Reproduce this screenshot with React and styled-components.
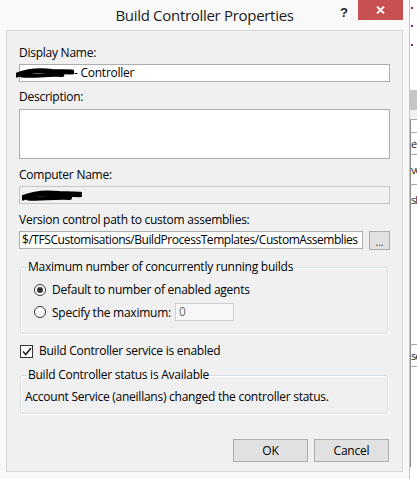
import React from "react";
import styled, { createGlobalStyle } from "styled-components";

const GlobalStyle = createGlobalStyle`
  html, body { margin: 0; padding: 0; background: #ffffff; }
  body {
    font-family: "Open Sans", "Noto Sans", sans-serif;
    font-size: 12px;
    color: #000;
  }
  * { box-sizing: border-box; }
`;

const Screen = styled.div`
  display: flex;
  width: 417px;
  height: 479px;
  overflow: hidden;
`;

const Window = styled.div`
  width: 410px;
  flex: none;
  height: 479px;
  background: #f9f9f9;
  border-right: 1px solid #c4c4c4;
  display: flex;
  flex-direction: column;
`;

const TitleBar = styled.div`
  height: 30px;
  display: grid;
  grid-template-columns: 1fr auto 1fr;
  align-items: start;
`;

const Title = styled.div`
  grid-column: 2;
  font-size: 15px;
  line-height: 30px;
  color: #1a1a1a;
  letter-spacing: -0.3px;
`;

const Controls = styled.div`
  grid-column: 3;
  display: flex;
  justify-content: flex-end;
  align-items: flex-start;
  padding-right: 6px;
`;

const Help = styled.div`
  font-family: "Liberation Sans", Arial, sans-serif;
  font-weight: bold;
  font-size: 13px;
  line-height: 20px;
  color: #222;
  margin-right: 10px;
  padding-top: 3px;
`;

const CloseButton = styled.div`
  width: 45px;
  height: 20px;
  background: #c75050;
  display: flex;
  align-items: center;
  justify-content: center;
`;

const Panel = styled.div`
  margin: 0 6px;
  height: 442px;
  border: 1px solid #d6d6d6;
  background: #f0f0f0;
  padding: 14px 12px 0 12px;
  display: flex;
  flex-direction: column;
`;

const Label = styled.div`
  line-height: 16px;
  height: 16px;
  margin-top: ${(p) => p.$mt || 0}px;
  white-space: nowrap;
  letter-spacing: -0.25px;
`;

const TextBox = styled.div`
  margin-top: ${(p) => (p.$mt === undefined ? 3 : p.$mt)}px;
  height: ${(p) => p.$h || 18}px;
  width: ${(p) => (p.$w ? p.$w + "px" : "100%")};
  border: 1px solid ${(p) => (p.$disabled ? "#c6c6c6" : "#abadb3")};
  background: ${(p) => (p.$disabled ? "#f0f0f0" : "#fff")};
  padding: 0 2px;
  line-height: 16px;
  display: flex;
  align-items: center;
  white-space: nowrap;
  overflow: visible;
  letter-spacing: -0.25px;
  flex: none;
`;

const PathRow = styled.div`
  margin-top: 3px;
  display: flex;
  align-items: flex-start;
  gap: 6px;
`;

const PathBox = styled(TextBox)`
  margin-top: 0;
  flex: 1;
  overflow: hidden;
  letter-spacing: -0.45px;
`;

const SmallButton = styled.div`
  width: 21px;
  height: 19px;
  background: #e1e1e1;
  border: 1px solid #adadad;
  display: flex;
  align-items: flex-end;
  justify-content: center;
  font-size: 10px;
  line-height: 14px;
  color: #333;
`;

const Group = styled.fieldset`
  margin: ${(p) => p.$mt}px 2px 0 1px;
  padding: 0;
  border: 1px solid #d5dfe5;
  border-radius: 3px;
  box-shadow: inset 1px 1px 0 #ffffff, 1px 1px 0 #ffffff;
  min-width: 0;
`;

const Legend = styled.legend`
  margin-left: 6px;
  padding: 0 1px;
  line-height: 16px;
  letter-spacing: -0.25px;
`;

const GroupBody = styled.div`
  padding: ${(p) => p.$pad};
  display: flex;
  flex-direction: column;
  gap: 5px;
`;

const OptionRow = styled.div`
  display: flex;
  align-items: center;
  min-height: 16px;
  letter-spacing: -0.25px;
  white-space: nowrap;
`;

const Radio = styled.span`
  width: 12px;
  height: 12px;
  border-radius: 50%;
  border: 1px solid #333;
  background: #fff;
  margin-right: 6px;
  display: flex;
  align-items: center;
  justify-content: center;
  flex: none;
  &::after {
    content: "";
    width: 6px;
    height: 6px;
    border-radius: 50%;
    background: ${(p) => (p.$checked ? "#333" : "transparent")};
  }
`;

const MaxBox = styled(TextBox)`
  margin: 0 0 0 4px;
  width: 59px;
  height: 18px;
  border-color: #cfcfcf;
  background: #f7f7f7;
  color: #6d6d6d;
  padding-left: 3px;
`;

const CheckRow = styled(OptionRow)`
  margin-top: 9px;
  margin-left: 1px;
  line-height: 16px;
`;

const CheckBox = styled.span`
  width: 13px;
  height: 13px;
  border: 1px solid #333;
  background: #fff;
  margin-right: 6px;
  display: flex;
  align-items: center;
  justify-content: center;
  flex: none;
`;

const StatusText = styled.div`
  line-height: 16px;
  letter-spacing: -0.25px;
  white-space: nowrap;
`;

const ButtonRow = styled.div`
  margin-top: 25px;
  display: flex;
  justify-content: flex-end;
  gap: 6px;
  padding-right: 1px;
`;

const Button = styled.div`
  width: 75px;
  height: 23px;
  background: #e1e1e1;
  border: 1px solid #adadad;
  display: flex;
  align-items: center;
  justify-content: center;
  letter-spacing: -0.2px;
`;

const Strip = styled.div`
  width: 7px;
  flex: none;
  background: #fff;
  display: flex;
  flex-direction: column;
`;

const StripCell = styled.div`
  height: ${(p) => p.$h}px;
  flex: none;
  background: ${(p) => p.$bg || "#fff"};
  border-bottom: ${(p) => (p.$line ? "1px solid #a9a9a9" : "none")};
  border-left: ${(p) => (p.$edge ? "1px solid #8a8a8a" : "none")};
  display: flex;
  justify-content: flex-start;
  align-items: center;
  white-space: nowrap;
  font-size: 11px;
  letter-spacing: -1px;
  color: #222;
  padding-left: 0;
`;

const Dot = styled.span`
  display: block;
  width: 2px;
  height: 2px;
  background: #7a2a6e;
  margin: ${(p) => p.$mt}px 0 0 1px;
`;

const DotCell = styled.div`
  height: 90px;
  display: flex;
  flex-direction: column;
`;

function Scribble({ w, h, style }) {
  return (
    <svg width={w} height={h} viewBox={`0 0 ${w} ${h}`} style={style}>
      <path
        d={`M1 ${h * 0.7} C ${w * 0.2} ${h * 0.3}, ${w * 0.4} ${h * 0.2}, ${w * 0.62} ${h * 0.35} L ${w - 2} ${h * 0.4}`}
        stroke="#000"
        strokeWidth={h * 0.5}
        fill="none"
        strokeLinecap="round"
      />
      <path
        d={`M${w * 0.1} ${h * 0.75} C ${w * 0.3} ${h * 0.9}, ${w * 0.5} ${h * 0.6}, ${w * 0.8} ${h * 0.7}`}
        stroke="#000"
        strokeWidth={h * 0.4}
        fill="none"
        strokeLinecap="round"
      />
    </svg>
  );
}

export default function App() {
  return (
    <>
      <GlobalStyle />
      <Screen>
        <Window>
          <TitleBar>
            <Title>Build Controller Properties</Title>
            <Controls>
              <Help>?</Help>
              <CloseButton>
                <svg width="9" height="8" viewBox="0 0 9 8">
                  <path d="M1 0.5 L8 7.5 M8 0.5 L1 7.5" stroke="#fff" strokeWidth="1.8" />
                </svg>
              </CloseButton>
            </Controls>
          </TitleBar>
          <Panel>
            <Label>Display Name:</Label>
            <TextBox>
              <Scribble w={58} h={10} style={{ marginLeft: -6, flex: "none" }} />
              <span>- Controller</span>
            </TextBox>
            <Label $mt={7}>Description:</Label>
            <TextBox $mt={4} $h={50} />
            <Label $mt={8}>Computer Name:</Label>
            <TextBox $disabled>
              <Scribble w={60} h={11} style={{ flex: "none" }} />
            </TextBox>
            <Label $mt={8}>Version control path to custom assemblies:</Label>
            <PathRow>
              <PathBox>$/TFSCustomisations/BuildProcessTemplates/CustomAssemblies</PathBox>
              <SmallButton>...</SmallButton>
            </PathRow>
            <Group $mt={9}>
              <Legend>Maximum number of concurrently running builds</Legend>
              <GroupBody $pad="6px 0 12px 13px">
                <OptionRow>
                  <Radio $checked />
                  Default to number of enabled agents
                </OptionRow>
                <OptionRow>
                  <Radio />
                  Specify the maximum:
                  <MaxBox $disabled>0</MaxBox>
                </OptionRow>
              </GroupBody>
            </Group>
            <CheckRow>
              <CheckBox>
                <svg width="10" height="9" viewBox="0 0 10 9">
                  <path d="M1 4.5 L3.8 7.5 L9 1" stroke="#222" strokeWidth="1.6" fill="none" />
                </svg>
              </CheckBox>
              Build Controller service is enabled
            </CheckRow>
            <Group $mt={8}>
              <Legend>Build Controller status is Available</Legend>
              <GroupBody $pad="6px 0 8px 4px">
                <StatusText>Account Service (aneillans) changed the controller status.</StatusText>
              </GroupBody>
            </Group>
            <ButtonRow>
              <Button>OK</Button>
              <Button>Cancel</Button>
            </ButtonRow>
          </Panel>
        </Window>
        <Strip>
          <DotCell>
            <Dot $mt={7} />
            <Dot $mt={16} />
            <Dot $mt={17} />
          </DotCell>
          <StripCell $h={20} $bg="#c6c6c6" />
          <StripCell $h={10} $bg="#f2f2f2" $line />
          <StripCell $h={13} $edge $line />
          <StripCell $h={22} $edge $line>e</StripCell>
          <StripCell $h={30} $edge $line>ve</StripCell>
          <StripCell $h={28} $edge>sh</StripCell>
          <StripCell $h={132} $edge $line />
          <StripCell $h={22} $edge $line>se</StripCell>
          <StripCell $h={100} $edge />
        </Strip>
      </Screen>
    </>
  );
}
